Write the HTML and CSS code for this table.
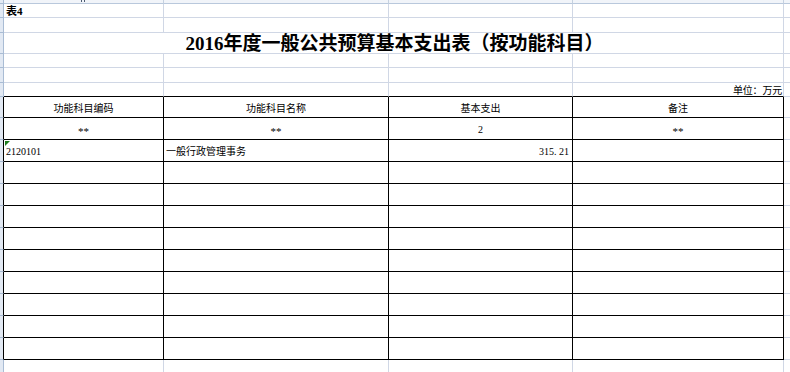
FILE: index.html
```html
<!DOCTYPE html>
<html lang="zh-CN">
<head>
<meta charset="utf-8">
<title>2016年度一般公共预算基本支出表（按功能科目）</title>
<link rel="stylesheet" href="styles.css">
</head>
<body>
<table class="sheet">
  <colgroup>
    <col class="c-strip"><col class="c-a"><col class="c-b"><col class="c-c"><col class="c-d"><col class="c-e">
  </colgroup>
  <tbody>
    <tr class="h4 colhdr">
      <td class="strip"></td>
      <td class="ch"><span class="aleg"></span></td><td class="ch"></td><td class="ch"></td><td class="ch"></td><td class="ch"></td>
    </tr>
    <tr class="h14">
      <td class="strip"></td>
      <td class="label">表4</td><td></td><td></td><td></td><td></td>
    </tr>
    <tr class="h15">
      <td class="strip"></td><td></td><td></td><td></td><td></td><td></td>
    </tr>
    <tr class="h21">
      <td class="strip"></td>
      <td colspan="4" class="title">2016年度一般公共预算基本支出表（按功能科目）</td>
      <td></td>
    </tr>
    <tr class="h14">
      <td class="strip"></td><td></td><td></td><td></td><td></td><td></td>
    </tr>
    <tr class="h15">
      <td class="strip"></td><td></td><td></td><td></td><td></td><td></td>
    </tr>
    <tr class="h14 above">
      <td class="strip"></td><td class="tb"></td><td class="tb"></td><td class="tb"></td>
      <td class="tb unit">单位：万元</td><td></td>
    </tr>
    <tr class="h21 trow">
      <td class="strip sb"></td>
      <td class="t ctr head">功能科目编码</td>
      <td class="t ctr head">功能科目名称</td>
      <td class="t ctr head">基本支出</td>
      <td class="t ctr head">备注</td>
      <td></td>
    </tr>
    <tr class="h22 trow">
      <td class="strip sb"></td>
      <td class="t ctr ast">**</td>
      <td class="t ctr ast">**</td>
      <td class="t ctr">2</td>
      <td class="t ctr ast">**</td>
      <td></td>
    </tr>
    <tr class="h22 trow">
      <td class="strip sb"></td>
      <td class="t code"><span class="flag"></span>2120101</td>
      <td class="t">一般行政管理事务</td>
      <td class="t num">315. 21</td>
      <td class="t"></td>
      <td></td>
    </tr>
    <tr class="h22 trow"><td class="strip sb"></td><td class="t"></td><td class="t"></td><td class="t"></td><td class="t"></td><td></td></tr>
    <tr class="h22 trow"><td class="strip sb"></td><td class="t"></td><td class="t"></td><td class="t"></td><td class="t"></td><td></td></tr>
    <tr class="h22 trow"><td class="strip sb"></td><td class="t"></td><td class="t"></td><td class="t"></td><td class="t"></td><td></td></tr>
    <tr class="h22 trow"><td class="strip sb"></td><td class="t"></td><td class="t"></td><td class="t"></td><td class="t"></td><td></td></tr>
    <tr class="h22 trow"><td class="strip sb"></td><td class="t"></td><td class="t"></td><td class="t"></td><td class="t"></td><td></td></tr>
    <tr class="h22 trow"><td class="strip sb"></td><td class="t"></td><td class="t"></td><td class="t"></td><td class="t"></td><td></td></tr>
    <tr class="h22 trow"><td class="strip sb"></td><td class="t"></td><td class="t"></td><td class="t"></td><td class="t"></td><td></td></tr>
    <tr class="h22 trow"><td class="strip sb"></td><td class="t"></td><td class="t"></td><td class="t"></td><td class="t"></td><td></td></tr>
    <tr class="h22 trow"><td class="strip sb"></td><td class="t"></td><td class="t"></td><td class="t"></td><td class="t"></td><td></td></tr>
    <tr class="h22">
      <td class="strip"></td><td></td><td></td><td></td><td></td><td></td>
    </tr>
  </tbody>
</table>
</body>
</html>
```
FILE: styles.css
```css
html, body {
  margin: 0;
  padding: 0;
  background: #ffffff;
  overflow: hidden;
}

.sheet {
  border-collapse: separate;
  border-spacing: 0;
  table-layout: fixed;
  width: 804px;
  font-family: "Liberation Serif", "Noto Sans CJK SC", serif;
  font-size: 10px;
  color: #000;
}

.c-strip { width: 4px; }
.c-a { width: 160px; }
.c-b { width: 225px; }
.c-c { width: 184px; }
.c-d { width: 211px; }
.c-e { width: 20px; }

.sheet td {
  box-sizing: border-box;
  padding: 0 2px;
  border-right: 1px solid #d0d7e5;
  border-bottom: 1px solid #d0d7e5;
  white-space: nowrap;
  overflow: hidden;
  line-height: 1;
  vertical-align: middle;
}

.h4 { height: 4px; }
.h14 { height: 14px; }
.h15 { height: 15px; }
.h21 { height: 21px; }
.h22 { height: 22px; }

.sheet td.strip {
  padding: 0;
  background: #e2e9f3;
  border-right: 1px solid #a9bcd4;
  border-bottom: 1px solid #a9bcd4;
}

.sheet td.strip.sb {
  border-right-color: #000;
}

.colhdr td.ch {
  padding: 0;
  background: #f1f4f9;
  border-right: 1px solid #c5d1e0;
  border-bottom: 1px solid #b9c8dc;
  position: relative;
}

.aleg {
  position: absolute;
  left: 77px;
  top: 0;
  width: 1px;
  height: 2px;
  background: #4a5a70;
  box-shadow: 3px 0 0 #4a5a70;
}

.sheet td.label {
  font-weight: bold;
  font-size: 11px;
  padding-left: 2px;
  padding-top: 1px;
}

.sheet td.title {
  text-align: center;
  font-weight: bold;
  font-size: 19px;
  padding: 1px 0 0 2px;
}

.sheet td.tb {
  border-bottom-color: #000;
}

.sheet td.unit {
  text-align: right;
  padding-right: 1px;
  padding-top: 2px;
  letter-spacing: -0.2px;
}

.sheet td.t {
  border-right-color: #000;
  border-bottom-color: #000;
  padding-top: 2px;
}

.sheet td.ctr {
  text-align: center;
}

.sheet td.head {
  padding-top: 4px;
}

.sheet td.ast {
  padding-top: 5px;
  font-size: 11px;
}

.sheet td.code {
  position: relative;
  padding-left: 2px;
}

.sheet td.num {
  text-align: right;
  padding-right: 3px;
}

.flag {
  position: absolute;
  left: 1px;
  top: 1px;
  width: 0;
  height: 0;
  border-top: 5px solid #1e7d1e;
  border-right: 5px solid transparent;
}
```
